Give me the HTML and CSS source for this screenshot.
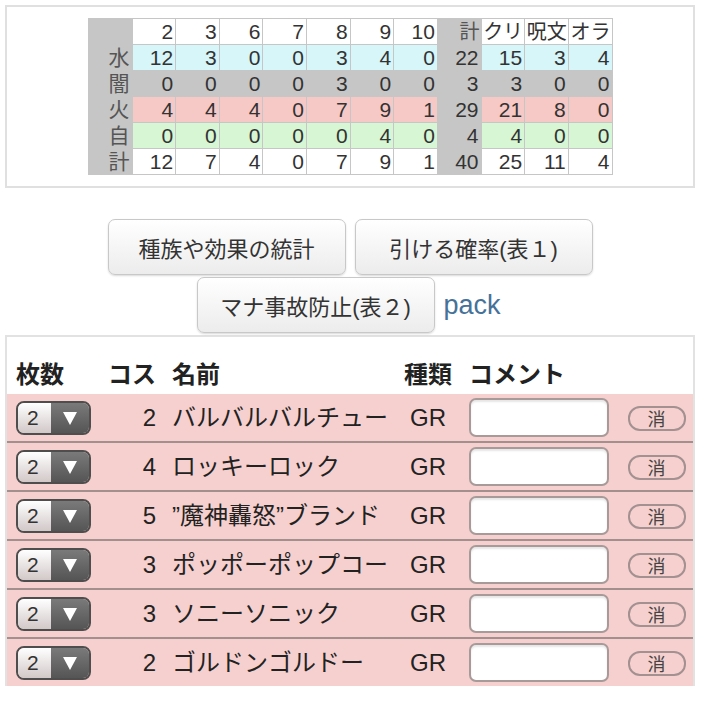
FILE: index.html
```html
<!DOCTYPE html>
<html lang="ja">
<head>
    <meta charset="UTF-8">
    <meta name="viewport" content="width=device-width, initial-scale=1.0">
    <title>デッキ</title>
    <link rel="stylesheet" href="styles.css">
</head>
<body>
    <div class="page">
        <div class="stats-box">
            <table class="stats">
                <tr class="row-head">
                    <th></th><td>2</td><td>3</td><td>6</td><td>7</td><td>8</td><td>9</td><td>10</td>
                    <th class="kana label">計</th><td class="kana">クリ</td><td class="kana">呪文</td><td class="kana">オラ</td>
                </tr>
                <tr class="row-water">
                    <th class="label">水</th><td>12</td><td>3</td><td>0</td><td>0</td><td>3</td><td>4</td><td>0</td>
                    <th>22</th><td>15</td><td>3</td><td>4</td>
                </tr>
                <tr class="row-dark">
                    <th class="label">闇</th><td>0</td><td>0</td><td>0</td><td>0</td><td>3</td><td>0</td><td>0</td>
                    <th>3</th><td>3</td><td>0</td><td>0</td>
                </tr>
                <tr class="row-fire">
                    <th class="label">火</th><td>4</td><td>4</td><td>4</td><td>0</td><td>7</td><td>9</td><td>1</td>
                    <th>29</th><td>21</td><td>8</td><td>0</td>
                </tr>
                <tr class="row-nature">
                    <th class="label">自</th><td>0</td><td>0</td><td>0</td><td>0</td><td>0</td><td>4</td><td>0</td>
                    <th>4</th><td>4</td><td>0</td><td>0</td>
                </tr>
                <tr class="row-total">
                    <th class="label">計</th><td>12</td><td>7</td><td>4</td><td>0</td><td>7</td><td>9</td><td>1</td>
                    <th>40</th><td>25</td><td>11</td><td>4</td>
                </tr>
            </table>
        </div>

        <div class="actions">
            <button class="btn">種族や効果の統計</button>
            <button class="btn">引ける確率(表１)</button>
            <button class="btn">マナ事故防止(表２)</button>
            <a class="pack-link" href="#">pack</a>
        </div>

        <div class="deck-box">
            <table class="deck">
                <thead>
                    <tr>
                        <th class="col-count">枚数</th>
                        <th class="col-cost">コス</th>
                        <th class="col-name">名前</th>
                        <th class="col-type">種類</th>
                        <th class="col-comment">コメント</th>
                        <th class="col-del"></th>
                    </tr>
                </thead>
                <tbody>
                    <tr>
                        <td class="col-count"><div class="count-select"><span class="count-value">2</span><span class="count-arrow"></span></div></td>
                        <td class="col-cost">2</td>
                        <td class="col-name">バルバルバルチュー</td>
                        <td class="col-type">GR</td>
                        <td class="col-comment"><input class="comment-input" type="text"></td>
                        <td class="col-del"><button class="del-btn">消</button></td>
                    </tr>
                    <tr>
                        <td class="col-count"><div class="count-select"><span class="count-value">2</span><span class="count-arrow"></span></div></td>
                        <td class="col-cost">4</td>
                        <td class="col-name">ロッキーロック</td>
                        <td class="col-type">GR</td>
                        <td class="col-comment"><input class="comment-input" type="text"></td>
                        <td class="col-del"><button class="del-btn">消</button></td>
                    </tr>
                    <tr>
                        <td class="col-count"><div class="count-select"><span class="count-value">2</span><span class="count-arrow"></span></div></td>
                        <td class="col-cost">5</td>
                        <td class="col-name">”魔神轟怒”ブランド</td>
                        <td class="col-type">GR</td>
                        <td class="col-comment"><input class="comment-input" type="text"></td>
                        <td class="col-del"><button class="del-btn">消</button></td>
                    </tr>
                    <tr>
                        <td class="col-count"><div class="count-select"><span class="count-value">2</span><span class="count-arrow"></span></div></td>
                        <td class="col-cost">3</td>
                        <td class="col-name">ポッポーポップコー</td>
                        <td class="col-type">GR</td>
                        <td class="col-comment"><input class="comment-input" type="text"></td>
                        <td class="col-del"><button class="del-btn">消</button></td>
                    </tr>
                    <tr>
                        <td class="col-count"><div class="count-select"><span class="count-value">2</span><span class="count-arrow"></span></div></td>
                        <td class="col-cost">3</td>
                        <td class="col-name">ソニーソニック</td>
                        <td class="col-type">GR</td>
                        <td class="col-comment"><input class="comment-input" type="text"></td>
                        <td class="col-del"><button class="del-btn">消</button></td>
                    </tr>
                    <tr>
                        <td class="col-count"><div class="count-select"><span class="count-value">2</span><span class="count-arrow"></span></div></td>
                        <td class="col-cost">2</td>
                        <td class="col-name">ゴルドンゴルドー</td>
                        <td class="col-type">GR</td>
                        <td class="col-comment"><input class="comment-input" type="text"></td>
                        <td class="col-del"><button class="del-btn">消</button></td>
                    </tr>
                </tbody>
            </table>
        </div>
    </div>
</body>
</html>
```

FILE: styles.css
```css
body {
    margin: 0;
    font-family: 'Liberation Sans', 'Noto Sans CJK JP', sans-serif;
    color: #333;
    background-color: white;
}
.page {
    width: 690px;
    margin-left: 5px;
    padding-top: 5px;
}
.stats-box {
    border: 2px solid #e0e0e0;
    padding: 11px 0 11px;
}
.stats {
    border-collapse: collapse;
    table-layout: fixed;
    width: 525px;
    margin: 0 auto;
    font-size: 21px;
}
.stats td,
.stats th {
    height: 25px;
    padding: 0 2px 0 0;
    line-height: 24px;
    text-align: right;
    white-space: nowrap;
    font-weight: normal;
    border: 1px solid #c6c6c6;
    color: #333;
    background-color: white;
}
.stats th {
    background-color: #c6c6c6;
}
.stats th.label {
    color: #555;
}
.stats tr > th:first-child {
    width: 41px;
}
.stats .kana {
    font-size: 20px;
    padding-right: 1px;
    overflow: hidden;
}
.row-water td {
    background-color: #d6f6f9;
}
.row-dark td {
    background-color: #c6c6c6;
}
.row-fire td {
    background-color: #f6c9c6;
}
.row-nature td {
    background-color: #d7f6d3;
}
.actions {
    display: flex;
    flex-wrap: wrap;
    justify-content: center;
    align-items: center;
    column-gap: 9px;
    row-gap: 2px;
    margin-top: 31px;
}
.btn {
    width: 238px;
    height: 56px;
    padding: 0;
    font-family: inherit;
    font-size: 22px;
    color: #333;
    background: linear-gradient(#ffffff, #ececec);
    border: 1px solid #c8c8c8;
    border-radius: 7px;
    box-shadow: 0 1px 2px rgba(0,0,0,0.15);
    cursor: pointer;
}
.pack-link {
    width: 60px;
    font-size: 27px;
    color: #46729a;
    text-decoration: none;
}
.deck-box {
    margin-top: 2px;
    border: 2px solid #e2e2e2;
    border-bottom: none;
}
.deck {
    width: 100%;
    border-collapse: collapse;
    table-layout: fixed;
    font-size: 24px;
}
.deck th {
    height: 52px;
    padding: 0 0 5px;
    vertical-align: bottom;
    text-align: left;
    font-weight: bold;
    line-height: 28px;
    color: #222;
}
.deck td {
    height: 47px;
    padding: 0;
    line-height: 28px;
    color: #222;
}
.deck tbody tr {
    background-color: #f5d0ce;
    border-top: 2px solid #a48f8f;
}
.deck tbody tr:first-child {
    border-top: none;
}
.deck .col-count {
    width: 84px;
    padding-left: 9px;
}
.deck .col-cost {
    width: 56px;
    text-align: right;
    padding-right: 4px;
}
.deck .col-name {
    width: 228px;
    padding-left: 12px;
    white-space: nowrap;
}
.deck .col-type {
    width: 56px;
    text-align: center;
}
.deck .col-comment {
    width: 151px;
    padding-left: 13px;
}
.deck td.col-del {
    text-align: center;
}
.count-select {
    display: flex;
    width: 71px;
    height: 30px;
    border: 2px solid #4e4e4e;
    border-radius: 8px;
    overflow: hidden;
}
.count-value {
    width: 33px;
    font-size: 21px;
    line-height: 30px;
    padding-left: 9px;
    box-sizing: border-box;
    color: #333;
    background: linear-gradient(#ffffff, #d2c8c8);
}
.count-arrow {
    flex: 1;
    position: relative;
    background: linear-gradient(#7a7a7a, #555555);
}
.count-arrow::after {
    content: '';
    position: absolute;
    left: 12px;
    top: 9px;
    border-left: 7px solid transparent;
    border-right: 7px solid transparent;
    border-top: 13px solid white;
}
.comment-input {
    display: block;
    width: 140px;
    height: 39px;
    box-sizing: border-box;
    border: 2px solid #a99a9a;
    border-radius: 7px;
    background-color: white;
    box-shadow: inset 0 2px 2px rgba(0,0,0,0.1);
}
.del-btn {
    width: 58px;
    height: 25px;
    padding: 0;
    font-family: 'Noto Sans CJK JP', sans-serif;
    font-size: 18px;
    line-height: 21px;
    color: #444;
    background-color: #f5d0ce;
    border: 2px solid #a39090;
    border-radius: 12px;
}
```
